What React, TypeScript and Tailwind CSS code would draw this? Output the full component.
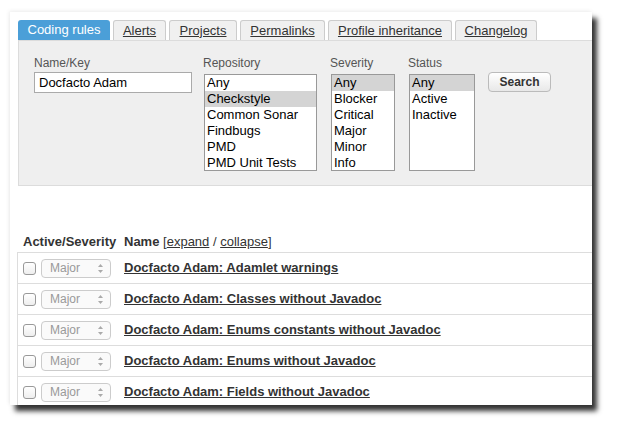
import React from 'react';

const tabs = [
  { label: 'Coding rules', w: 'w-[92px]', active: true },
  { label: 'Alerts', w: 'w-[53px]' },
  { label: 'Projects', w: 'w-[68px]' },
  { label: 'Permalinks', w: 'w-[85px]' },
  { label: 'Profile inheritance', w: 'w-[124px]' },
  { label: 'Changelog', w: 'w-[82px]' },
];

const rules = [
  'Docfacto Adam: Adamlet warnings',
  'Docfacto Adam: Classes without Javadoc',
  'Docfacto Adam: Enums constants without Javadoc',
  'Docfacto Adam: Enums without Javadoc',
  'Docfacto Adam: Fields without Javadoc',
];

const ListBox = ({ items, selected, w }: { items: string[]; selected: string; w: string }) => (
  <div className={`${w} h-[97px] border border-[#999] bg-white overflow-hidden`}>
    {items.map((it) => (
      <div
        key={it}
        className={`h-[16px] leading-[16px] pl-[2px] text-[13px] text-black whitespace-nowrap ${
          it === selected ? 'bg-[#d4d4d4]' : ''
        }`}
      >
        {it}
      </div>
    ))}
  </div>
);

const Label = ({ children }: { children: React.ReactNode }) => (
  <div className="h-[16px] leading-[16px] text-[12px] text-[#555]">{children}</div>
);

export default function App() {
  return (
    <div className="w-[623px] h-[433px] bg-white overflow-hidden font-['Liberation_Sans',Arial,sans-serif] pt-[12px] pl-[10px]">
      <div className="w-[582px] h-[393px] bg-white overflow-hidden shadow-[5px_6px_5px_rgba(0,0,0,0.8),-1px_-1px_4px_rgba(0,0,0,0.08)]">
        <div className="w-[640px] pt-[8px] pl-[8px]">
          {/* tabs */}
          <div className="flex gap-[3px] h-[20px] items-end">
            {tabs.map((t) => (
              <div
                key={t.label}
                className={`${t.w} h-[20px] flex items-center justify-center rounded-t-[3px] text-[13px] ${
                  t.active
                    ? 'bg-[#4b9fd8] text-white'
                    : 'bg-[#f0f0f0] border border-b-0 border-[#ccc] text-[#333] underline'
                }`}
              >
                {t.label}
              </div>
            ))}
          </div>

          {/* search panel */}
          <div className="h-[146px] bg-[#efefef] border border-[#dcdcdc] pt-[14px] pl-[15px] flex">
            <div className="w-[158px]">
              <Label>Name/Key</Label>
              <div className="mt-[1px] h-[21px] border border-[#aaa] bg-white pl-[4px] text-[13px] leading-[19px] text-black">
                Docfacto Adam
              </div>
            </div>
            <div className="ml-[11px]">
              <Label>Repository</Label>
              <div className="mt-[3px] ml-[1px]">
                <ListBox
                  w="w-[113px]"
                  selected="Checkstyle"
                  items={['Any', 'Checkstyle', 'Common Sonar', 'Findbugs', 'PMD', 'PMD Unit Tests']}
                />
              </div>
            </div>
            <div className="ml-[13px]">
              <Label>Severity</Label>
              <div className="mt-[3px] ml-[1px]">
                <ListBox
                  w="w-[64px]"
                  selected="Any"
                  items={['Any', 'Blocker', 'Critical', 'Major', 'Minor', 'Info']}
                />
              </div>
            </div>
            <div className="ml-[13px]">
              <Label>Status</Label>
              <div className="mt-[3px] ml-[1px]">
                <ListBox w="w-[66px]" selected="Any" items={['Any', 'Active', 'Inactive']} />
              </div>
            </div>
            <div className="ml-[13px] pt-[17px]">
              <div className="w-[63px] h-[20px] rounded-[4px] border border-[#bbb] bg-gradient-to-b from-white to-[#e8e8e8] flex items-center justify-center text-[12px] font-bold text-[#333]">
                Search
              </div>
            </div>
          </div>

          {/* rules table */}
          <div className="mt-[45px] pl-[5px] h-[21px] flex items-center text-[13px] text-[#333]">
            <span className="font-bold w-[101px] whitespace-nowrap">Active/Severity</span>
            <span className="whitespace-nowrap">
              <span className="font-bold">Name</span>{' '}
              [<span className="underline">expand</span> / <span className="underline">collapse</span>]
            </span>
          </div>
          <div className="-ml-[1px] border-l border-[#ddd]">
            {rules.map((r) => (
              <div key={r} className="h-[31px] border-t border-[#ddd] flex items-center">
                <div className="ml-[5px] w-[13px] h-[13px] rounded-[3px] border border-[#999] bg-gradient-to-b from-white to-[#eee]" />
                <div className="ml-[5px] w-[70px] h-[19px] rounded-[4px] border border-[#ccc] bg-[#fafafa] flex items-center justify-between pl-[8px] pr-[7px]">
                  <span className="text-[12px] text-[#999]">Major</span>
                  <svg width="5" height="9" viewBox="0 0 5 9" className="fill-[#aaa]">
                    <path d="M2.5 0 L5 3 L0 3 Z" />
                    <path d="M0 6 L5 6 L2.5 9 Z" />
                  </svg>
                </div>
                <span className="ml-[13px] text-[13px] font-bold text-[#333] underline whitespace-nowrap">{r}</span>
              </div>
            ))}
          </div>
        </div>
      </div>
    </div>
  );
}
